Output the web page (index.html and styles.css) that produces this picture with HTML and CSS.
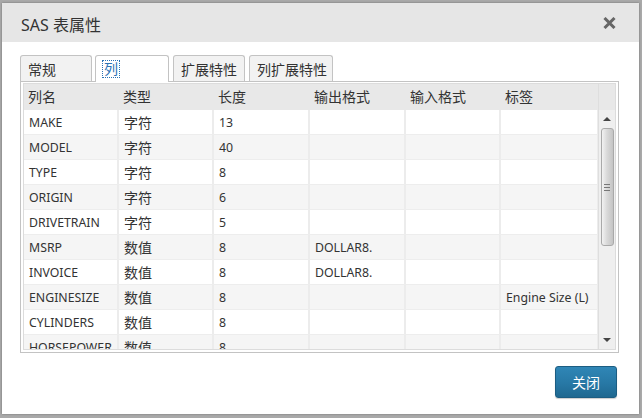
FILE: index.html
```html
<!DOCTYPE html>
<html lang="zh">
<head>
<meta charset="utf-8">
<title>SAS 表属性</title>
<link rel="stylesheet" href="styles.css">
</head>
<body>
<div class="dialog">
  <div class="dlg-header">
    <span class="dlg-title">SAS 表属性</span>
    <span class="dlg-close" aria-label="关闭">
      <svg width="13" height="12" viewBox="0 0 13 12"><path d="M1.5 1 L11.5 11 M11.5 1 L1.5 11" stroke="#666" stroke-width="3" stroke-linecap="butt"/></svg>
    </span>
  </div>
  <div class="dlg-body">
    <div class="tabs">
      <div class="tab t1">常规</div>
      <div class="tab t2 active"><span class="focus">列</span></div>
      <div class="tab t3">扩展特性</div>
      <div class="tab t4">列扩展特性</div>
    </div>
    <div class="panel">
      <div class="grid">
        <div class="grid-head">
          <div class="hc c1">列名</div>
          <div class="hc c2">类型</div>
          <div class="hc c3">长度</div>
          <div class="hc c4">输出格式</div>
          <div class="hc c5">输入格式</div>
          <div class="hc c6">标签</div>
          <div class="hc sb-head"></div>
        </div>
        <div class="grid-main">
          <div class="rows">
            <div class="row"><div class="cell c1">MAKE</div><div class="cell c2 zh">字符</div><div class="cell c3">13</div><div class="cell c4"></div><div class="cell c5"></div><div class="cell c6"></div></div>
            <div class="row alt"><div class="cell c1">MODEL</div><div class="cell c2 zh">字符</div><div class="cell c3">40</div><div class="cell c4"></div><div class="cell c5"></div><div class="cell c6"></div></div>
            <div class="row"><div class="cell c1">TYPE</div><div class="cell c2 zh">字符</div><div class="cell c3">8</div><div class="cell c4"></div><div class="cell c5"></div><div class="cell c6"></div></div>
            <div class="row alt"><div class="cell c1">ORIGIN</div><div class="cell c2 zh">字符</div><div class="cell c3">6</div><div class="cell c4"></div><div class="cell c5"></div><div class="cell c6"></div></div>
            <div class="row"><div class="cell c1">DRIVETRAIN</div><div class="cell c2 zh">字符</div><div class="cell c3">5</div><div class="cell c4"></div><div class="cell c5"></div><div class="cell c6"></div></div>
            <div class="row alt"><div class="cell c1">MSRP</div><div class="cell c2 zh">数值</div><div class="cell c3">8</div><div class="cell c4">DOLLAR8.</div><div class="cell c5"></div><div class="cell c6"></div></div>
            <div class="row"><div class="cell c1">INVOICE</div><div class="cell c2 zh">数值</div><div class="cell c3">8</div><div class="cell c4">DOLLAR8.</div><div class="cell c5"></div><div class="cell c6"></div></div>
            <div class="row alt"><div class="cell c1">ENGINESIZE</div><div class="cell c2 zh">数值</div><div class="cell c3">8</div><div class="cell c4"></div><div class="cell c5"></div><div class="cell c6">Engine Size (L)</div></div>
            <div class="row"><div class="cell c1">CYLINDERS</div><div class="cell c2 zh">数值</div><div class="cell c3">8</div><div class="cell c4"></div><div class="cell c5"></div><div class="cell c6"></div></div>
            <div class="row alt"><div class="cell c1">HORSEPOWER</div><div class="cell c2 zh">数值</div><div class="cell c3">8</div><div class="cell c4"></div><div class="cell c5"></div><div class="cell c6"></div></div>
          </div>
          <div class="vscroll">
            <div class="arrow up"></div>
            <div class="thumb"><span class="grip"></span></div>
            <div class="track"></div>
            <div class="arrow down"></div>
          </div>
        </div>
      </div>
    </div>
    <div class="actions">
      <button class="btn-primary">关闭</button>
    </div>
  </div>
</div>
</body>
</html>
```

FILE: styles.css
```css
html, body {
  margin: 0;
  padding: 0;
}
body {
  width: 642px;
  height: 418px;
  overflow: hidden;
  background: #a9a9a9;
  font-family: "Noto Sans", "Noto Sans CJK SC", sans-serif;
  color: #333;
}
.dialog {
  margin: 3px 3px 0 2px;
  width: 637px;
  height: 411px;
  background: #fff;
  box-shadow: 0 0 2px rgba(0,0,0,0.35);
  display: flex;
  flex-direction: column;
}
.dlg-header {
  height: 39px;
  background: #e6e6e6;
  display: flex;
  align-items: center;
  justify-content: space-between;
  padding: 2px 23px 0 19px;
  box-sizing: border-box;
}
.dlg-title {
  font-size: 16px;
  color: #333;
}
.dlg-close {
  display: flex;
  width: 13px;
  height: 12px;
  margin-top: -2px;
}
.dlg-body {
  flex: 1;
  padding: 13px 0 0 18px;
  display: flex;
  flex-direction: column;
}
.tabs {
  display: flex;
  height: 26px;
  gap: 3px;
}
.tab {
  box-sizing: border-box;
  height: 26px;
  border: 1px solid #c3c3c3;
  border-bottom: none;
  border-radius: 3px 3px 0 0;
  background: #f2f2f2;
  font-size: 14px;
  line-height: 28px;
  padding-left: 7px;
  color: #333;
}
.t1 { width: 72px; }
.t2 { width: 74px; }
.t3 { width: 72px; margin-left: 1px; }
.t4 { width: 84px; margin-left: 1px; }
.tab.active {
  background: #fff;
  height: 27px;
  position: relative;
  z-index: 1;
  color: #2a72b5;
}
.focus {
  outline: 1px dotted #2a72b5;
  outline-offset: 0;
  display: inline-block;
  line-height: 16px;
  padding: 0 1px;
  margin-top: 5px;
  vertical-align: top;
}
.panel {
  box-sizing: border-box;
  width: 599px;
  height: 272px;
  border: 1px solid #c3c3c3;
  padding: 1px 2px 2px 2px;
}
.grid {
  border: 1px solid #dcdcdc;
  height: 267px;
  box-sizing: border-box;
  display: flex;
  flex-direction: column;
  overflow: hidden;
}
.grid-head {
  display: flex;
  height: 26px;
  background: #e8e8e8;
  flex: none;
}
.hc {
  box-sizing: border-box;
  font-size: 14px;
  line-height: 26px;
  padding-left: 4px;
  color: #333;
}
.sb-head {
  width: 17px;
  border-left: 1px solid #dedede;
}
.c1 { width: 95px; }
.c2 { width: 95px; }
.c3 { width: 96px; }
.c4 { width: 96px; }
.c5 { width: 95px; }
.c6 { width: 97px; }
.grid-main {
  flex: 1;
  display: flex;
  overflow: hidden;
}
.rows {
  width: 574px;
  overflow: hidden;
}
.row {
  display: flex;
  height: 25px;
  box-sizing: border-box;
  border-bottom: 1px solid #ededed;
  background: #fff;
}
.row.alt {
  background: #f5f5f5;
}
.cell {
  box-sizing: border-box;
  border-right: 2px solid #ececec;
  padding-left: 5px;
  font-size: 12.3px;
  line-height: 25px;
  color: #333;
  white-space: nowrap;
}
.cell.c6 { border-right: 1px solid #ececec; }
.cell.zh {
  font-size: 14px;
  line-height: 25px;
}
.vscroll {
  width: 17px;
  background: #efefef;
  border-left: 1px solid #dedede;
  box-sizing: border-box;
  display: flex;
  flex-direction: column;
  align-items: center;
}
.arrow {
  width: 0;
  height: 0;
  border-left: 4px solid transparent;
  border-right: 4px solid transparent;
}
.arrow.up {
  border-bottom: 4px solid #444;
  margin-top: 7px;
  margin-bottom: 7px;
}
.arrow.down {
  border-top: 4px solid #444;
  margin-bottom: 7px;
}
.thumb {
  width: 13px;
  height: 118px;
  box-sizing: border-box;
  border: 1px solid #a9a9a9;
  border-radius: 3px;
  background: linear-gradient(to right, #f2f2f2 0%, #d9d9d9 45%, #c4c4c4 100%);
  display: flex;
  align-items: center;
  justify-content: center;
}
.grip {
  width: 6px;
  height: 5px;
  border-top: 1px solid #777;
  border-bottom: 1px solid #777;
  position: relative;
}
.grip::after {
  content: "";
  position: absolute;
  left: 0;
  right: 0;
  top: 2px;
  border-top: 1px solid #777;
}
.track { flex: 1; }
.actions {
  display: flex;
  justify-content: flex-end;
  padding: 13px 22px 0 0;
}
.btn-primary {
  width: 62px;
  height: 32px;
  border: 1px solid #1c5d82;
  border-radius: 3px;
  background: linear-gradient(to bottom, #2f86b6 0%, #2778a5 55%, #1f6890 100%);
  color: #fff;
  font-family: "Noto Sans", "Noto Sans CJK SC", sans-serif;
  font-size: 14px;
  padding: 0;
  box-shadow: 0 1px 1px rgba(0,0,0,0.2);
}
```
